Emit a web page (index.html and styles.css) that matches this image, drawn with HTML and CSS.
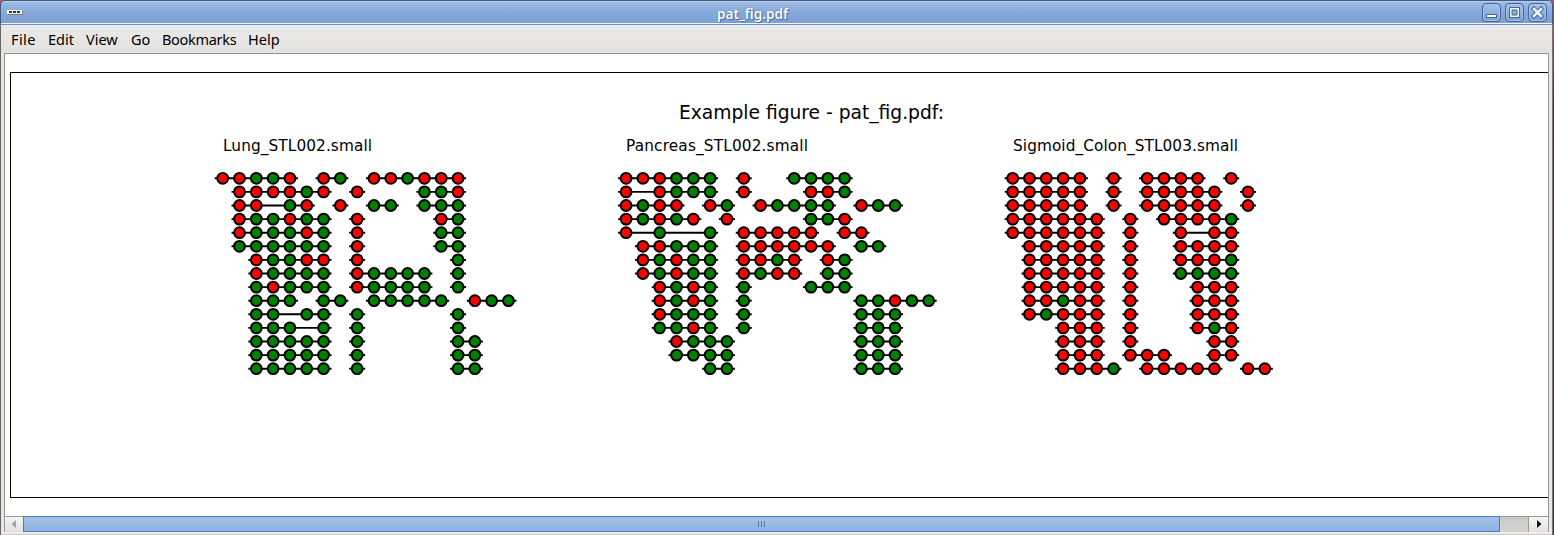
FILE: index.html
```html
<!DOCTYPE html>
<html lang="en">
<head>
<meta charset="utf-8">
<title>pat_fig.pdf</title>
<link rel="stylesheet" href="styles.css">
</head>
<body>
<div class="window">
  <header class="titlebar">
    <svg class="app-icon" width="16" height="6" viewBox="0 0 16 6"><path fill="#f4f4f4" d="M0 0h15v4H0z"/><path fill="#777" d="M1 4h15v1H1zM15 1h1v4h-1z"/><path fill="#333" d="M2 1h3v2H2zM6 1h3v2H6zM10 1h3v2h-3z"/></svg>
    <span class="title">pat_fig.pdf</span>
    <div class="controls">
      <button class="control" aria-label="Minimize"><svg width="17" height="17"><path d="M3.500 10.500h10v3h-10z" fill="#fff" stroke="#42659b"/></svg></button>
      <button class="control" aria-label="Maximize"><svg width="17" height="17"><path d="M3.500 3.500h10v10h-10z" fill="#edf3fb" stroke="#42659b"/><path d="M6 6h5v5H6z" fill="#8bacdb" stroke="#42659b"/></svg></button>
      <button class="control" aria-label="Close"><svg width="17" height="17"><path d="M5 5l7 7M12 5l-7 7" stroke="#42659b" stroke-width="4.500" stroke-linecap="square"/><path d="M5 5l7 7M12 5l-7 7" stroke="#f3f7fc" stroke-width="2.600" stroke-linecap="square"/></svg></button>
    </div>
  </header>
  <nav class="menubar"><span class="loose">File</span><span>Edit</span><span>View</span><span>Go</span><span class="tight">Bookmarks</span><span>Help</span></nav>
  <main class="viewport">
    <div class="page">
      <svg id="figure" class="figure" width="1537" height="424" viewBox="11 73 1537 424">
        <text class="heading" x="679" y="119" textLength="265">Example figure - pat_fig.pdf:</text>
      </svg>
    </div>
  </main>
  <div class="scrollbar">
    <div class="arrow"><svg width="18" height="14"><path d="M11 3v8L6.500 7z" fill="#a2a2a0"/></svg></div>
    <div class="thumb"><i></i><i></i><i></i></div>
    <div class="trough"></div>
    <div class="arrow"><svg width="18" height="14"><path d="M8 3v8l4.500-4z" fill="#111"/></svg></div>
  </div>
  <div class="frame-bottom"></div>
</div>
<script src="figure.js"></script>
</body>
</html>
```
FILE: styles.css
```css
* { box-sizing: border-box; }
body {
  margin: 0;
  overflow: hidden;
  background: linear-gradient(#c04a72, #7c1737 20%, #6a2234 60%, #264058);
  font-family: "Noto Sans", sans-serif;
}
.window {
  width: 1553px;
  height: 535px;
  display: flex;
  flex-direction: column;
  background: #e8e7e6;
  border-left: 1px solid #6b6664;
  border-right: 1px solid #777;
  border-radius: 5px 5px 0 0;
}
.titlebar {
  flex: none;
  height: 25px;
  margin: 0 -1px;
  display: grid;
  grid-template-columns: 22px 1fr 68px;
  align-items: start;
  border: 1px solid #46597b;
  border-bottom: 1px solid #6891c8;
  border-radius: 5px 5px 0 0;
  background: linear-gradient(#b7cfec 0 1px, #9dbbe4 1px, #86a9da 12px, #7ba0d1 22px, #f2f6fb 22px);
}
.app-icon { margin: 9px 0 0 6px; }
.title {
  text-align: center;
  color: #fff;
  font-size: 13.600px;
  font-weight: 600;
  line-height: 19px;
  padding-top: 3px;
  text-shadow: 0 0 1px #35568c, 1px 1px 1px #466ba3;
}
.controls { display: flex; gap: 4px; padding-top: 2px; margin-left: -2px; }
.control {
  width: 19px;
  height: 19px;
  padding: 0;
  border: 1px solid #42659b;
  border-radius: 4px;
  background: linear-gradient(#a4c1e8, #7b9fd1);
  box-shadow: inset 0 0 0 1px #a9c3e6;
}
.control svg { display: block; }
.menubar {
  flex: none;
  height: 28px;
  display: grid;
  grid-template-columns: 37px 38px 45px 31px 86px 1fr;
  padding-left: 10px;
  font-size: 14.500px;
  line-height: 29px;
  color: #000;
  background: linear-gradient(#ebeae9, #e3e2e0);
}
.loose { letter-spacing: 0.400px; }
.tight { letter-spacing: -0.300px; }
.title { justify-self: center; position: relative; left: -1px; }
.viewport {
  flex: none;
  height: 463px;
  margin: 0 3px;
  border: 1px solid #949492;
  border-bottom: 0;
  background: #fff;
  padding: 18px 0 0 5px;
  overflow: hidden;
}
.page {
  height: 426px;
  border: 1px solid #000;
  border-right: 0;
  overflow: hidden;
}
.figure { display: block; }
.figure text { font-family: "DejaVu Sans", sans-serif; fill: #000; }
.heading { font-size: 18.700px; }
.label { font-size: 15.300px; }
.read { stroke: #000; stroke-width: 1.900; fill: none; }
.site { stroke: #000; stroke-width: 2; }
.methylated { fill: #f00; }
.unmethylated { fill: #008000; }
.scrollbar {
  flex: none;
  height: 16px;
  margin: 0 3px;
  display: grid;
  grid-template-columns: 18px 1477px 1fr 19px;
  border: 1px solid #9a9a98;
  border-top: 0;
}
.arrow { border-top: 1px solid #9a9a98; background: linear-gradient(#f6f6f5, #e2e1df); }
.arrow svg { display: block; }
.thumb {
  border: 1px solid #4c7cba;
  height: 16px;
  background: linear-gradient(#a5c2e9, #8eb0df);
  display: flex;
  justify-content: center;
  align-items: center;
  gap: 2px;
}
.thumb i { width: 1px; height: 6px; background: #5c7da9; }
.trough { border-top: 1px solid #9a9a98; border-right: 1px solid #9a9a98; background: linear-gradient(#c9c8c6, #d5d4d2); }
.frame-bottom { height: 3px; border-bottom: 1px solid #c9c8c6; background: #eeedec; }
```
FILE: figure.js
```js
// R / G: methylated / unmethylated site, "-": site without data inside a read, ".": no read
const panels = [
  { label: "Lung_STL002.small", x: 222.7, labelX: 223, width: 149, rows: [
    "RRGGR.RG.RRGRRR", ".RRRRGR.R...GGR", ".RR-GR.R.GG.GGG", ".RGGRGG.R....RG",
    ".RGGGRG.R....GG", ".GGGGGG.R....GG", "..RGGRR.R.....G", "..RGGGG.RGGGG.G",
    "..GRGGG.RGGGG.G", "..GGG.GG.GGGGG.RGG", "..GG-GG.G.....G", "..GGG-G.G.....G",
    "..GGGGG.G.....GG", "..GGGGG.G.....GG", "..GGGGG.G.....GG"] },
  { label: "Pancreas_STL002.small", x: 626.1, labelX: 626, width: 182, rows: [
    "RRRGGG.R..GGGG", "R-RGGG.R...RRG", "RGRR.RG.RGGGG.RGG", "RGRGR.R....GGR",
    "R-G--G.RRRRR.RR", ".RRGGG.RRRRRR.GG", ".RGRGG.RRGR.RG", ".RGRGG.RGRR.GG",
    "..RGRG.G...GGG", "..RGRG.G......GGRGG", "..RGGG.G......GGG", "..GGRG.G......GGG",
    "...RGGG.......GGG", "...GGGG.......GGG", ".....GG.......GGG"] },
  { label: "Sigmoid_Colon_STL003.small", x: 1012.7, labelX: 1013, width: 225, rows: [
    "RRRRR.R.RRRR.R", "RRRRR.R.RRRRR.R", "RRRRR.R.RRRRR.R", "RRRRRR.R.RRRRG",
    "RRRRRR.R..R-RR", ".RRRRR.R..RRRR", ".RRRRR.R..RRRG", ".RRRRR.R..GGGG",
    ".RRRRR.R...RRR", ".RRGRR.R...RRR", ".RGRRR.R...RRR", "...RRR.R...RGR",
    "...RRR.R....RR", "...RRR.RRR..RR", "...RRRG.RRRRR.RR"] }
];
const STEP_X = 16.81, STEP_Y = 13.6, TOP = 178.3, OVERHANG = 8;

const svg = document.getElementById("figure");
function add(name, attrs) {
  const el = document.createElementNS("http://www.w3.org/2000/svg", name);
  for (const key in attrs) el.setAttribute(key, attrs[key]);
  svg.appendChild(el);
  return el;
}

for (const panel of panels) {
  add("text", { class: "label", x: panel.labelX, y: 151, textLength: panel.width }).textContent = panel.label;
  panel.rows.forEach((row, r) => {
    const y = TOP + r * STEP_Y;
    for (const read of row.matchAll(/[RG-]+/g)) {
      const x1 = panel.x + read.index * STEP_X;
      const x2 = x1 + (read[0].length - 1) * STEP_X;
      add("path", { class: "read", d: `M${x1 - OVERHANG} ${y}H${x2 + OVERHANG}` });
      [...read[0]].forEach((site, i) => {
        if (site === "-") return;
        add("circle", { class: "site " + (site === "R" ? "methylated" : "unmethylated"), cx: x1 + i * STEP_X, cy: y, r: 5.4 });
      });
    }
  });
}
```
